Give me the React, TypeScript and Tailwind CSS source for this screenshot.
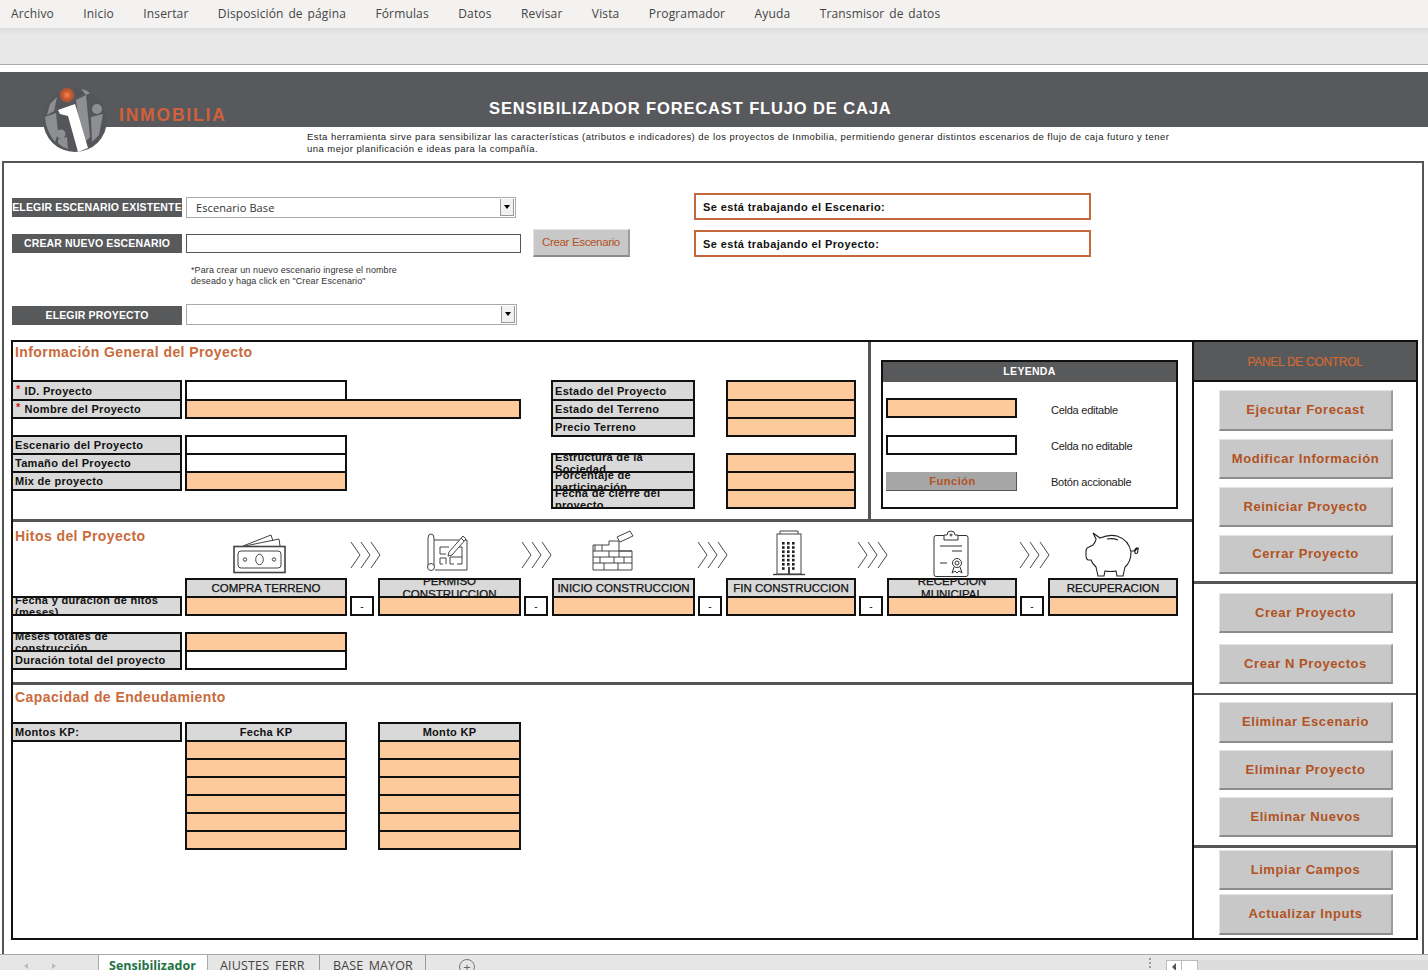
import React from "react";

const ARIAL = "font-[Liberation_Sans,Arial,sans-serif]";
const OPEN = "font-[Open_Sans,sans-serif]";

function Chevrons() {
  return (
    <svg width="32" height="28" viewBox="0 0 32 28" fill="none" stroke="#333" strokeWidth="0.9">
      <path d="M1 1 L10 14 L1 27 M11 1 L20 14 L11 27 M21 1 L30 14 L21 27" />
    </svg>
  );
}

function MoneyIcon() {
  return (
    <svg width="53" height="41" viewBox="0 0 53 41" fill="none" stroke="#444" strokeWidth="1">
      <path d="M10 13 L38 2 L40 8 M12 13 L46 6 L47 13" />
      <rect x="1" y="13.5" width="51" height="26" strokeWidth="1.6" fill="#fff" />
      <rect x="5" y="18" width="43" height="17" rx="3" />
      <ellipse cx="26.5" cy="26.5" rx="3.8" ry="5.2" />
      <circle cx="12" cy="26.5" r="1.7" />
      <circle cx="41" cy="26.5" r="1.7" />
    </svg>
  );
}

function BlueprintIcon() {
  return (
    <svg width="41" height="39" viewBox="0 0 41 39" fill="none" stroke="#444" strokeWidth="1">
      <path d="M7 7 H40 V37 H8" />
      <path d="M1 33 V5 Q1 1 4 1 Q7 1 7 5 V33" fill="#fff" />
      <circle cx="4" cy="34" r="3.5" fill="#fff" />
      <path d="M13 14 H22 M13 14 V21 H19 M13 25 H19 V31 M13 25 V31 H16 M23 24 H35 V14 H30 M23 24 V31 H27 M35 24 V31 H30" />
      <path d="M22 19 L36 3 L39 6 L25 22 L21 23 Z" fill="#fff" />
      <path d="M34 5 L37 8" />
    </svg>
  );
}

function BrickIcon() {
  return (
    <svg width="42" height="41" viewBox="0 0 42 41" fill="none" stroke="#444" strokeWidth="1">
      <path d="M1 15 H17 V11 H27 V21 H40 V40 H1 Z" />
      <path d="M1 21 H40 M1 27 H40 M1 33 H40 M10 15 V21 M17 21 V27 M27 21 V27 M8 27 V33 M22 27 V33 M32 27 V33 M12 33 V40 M26 33 V40 M3 15 V21" />
      <path d="M25 7 L38 1 L41 6 L28 12 Z" fill="#fff" />
    </svg>
  );
}

function BuildingIcon() {
  const dots: React.ReactNode[] = [];
  for (let r = 0; r < 7; r++) {
    for (let c = 0; c < 3; c++) {
      if (r === 6 && c === 1) continue;
      dots.push(<rect key={`${r}-${c}`} x={9 + c * 5} y={12 + r * 4.2} width="2.6" height="2.6" fill="#222" stroke="none" />);
    }
  }
  return (
    <svg width="32" height="46" viewBox="0 0 32 46" fill="none" stroke="#444" strokeWidth="1">
      <path d="M7 4 V1 H25 V4" />
      <rect x="4" y="4" width="24" height="40" />
      {dots}
      <path d="M0 44.5 H32" strokeWidth="1.4" />
      <path d="M16 37 V44" strokeWidth="2" />
    </svg>
  );
}

function ClipboardIcon() {
  return (
    <svg width="36" height="48" viewBox="0 0 36 48" fill="none" stroke="#333" strokeWidth="1">
      <rect x="1" y="5.5" width="34" height="41" rx="2" fill="#fff" />
      <path d="M11 10 V5 H14 Q14 1 18 1 Q22 1 22 5 H25 V10 Z" fill="#fff" />
      <circle cx="18" cy="5" r="1" />
      <path d="M7 16 H29 M19 21 H29 M7 33 H14" />
      <circle cx="24" cy="33" r="4.5" />
      <circle cx="24" cy="33" r="2" />
      <path d="M21 37 L19 43 L22 41 L24 43 L26 41 L29 43 L27 37" />
    </svg>
  );
}

function PiggyIcon() {
  return (
    <svg width="56" height="46" viewBox="0 0 56 46" fill="none" stroke="#222" strokeWidth="1.1">
      <path d="M8 1 L15 6 Q24 2 32 4 Q44 8 46 20 Q46 30 40 35 L38 44 H32 L31 39 Q26 40 20 39 L19 44 H13 L11 35 Q7 31 6 28 H3 Q1 27 1 24 V19 Q1 16 4 15 L8 13 Q11 9 11 7 Z" />
      <path d="M22 7 Q28 6 33 8" />
      <path d="M46 19 H49 Q52 14 53 17 Q53 23 50 21 Q49 18 54 16" />
    </svg>
  );
}

function Logo() {
  return (
    <svg width="64" height="66" viewBox="0 0 64 66" className="absolute left-[43px] top-[15px]">
      <defs>
        <radialGradient id="dot">
          <stop offset="0" stopColor="#f08a50" />
          <stop offset="0.6" stopColor="#c9552a" />
          <stop offset="1" stopColor="#8a5a45" />
        </radialGradient>
      </defs>
      <circle cx="32" cy="33" r="32" fill="#55565a" />
      <circle cx="24" cy="8" r="7.5" fill="url(#dot)" />
      <g fill="#8e8f92">
        <path d="M7 17 L14 10 L11 24 L4 28 Z" />
        <path d="M2 30 L13 26 L15 46 L12 55 Q3 44 2 30 Z" />
        <circle cx="18" cy="47" r="4.5" />
        <path d="M15 52 L24 50 L25 62 Q19 60 15 56 Z" />
        <path d="M38 2 Q44 3 47 6 L43 8 Z" />
        <path d="M33 13 L43 8 L47 50 L39 58 Z" />
        <circle cx="54" cy="22" r="5" />
        <path d="M48 30 L60 27 L56 48 L49 55 Z" />
      </g>
      <path d="M15 23 L32 17 L45 61 L35 65 L25 29 L17 27 Z" fill="#fff" />
    </svg>
  );
}

type RowProps = { label: React.ReactNode; value?: "w" | "o"; h?: string; valueW?: string; star?: boolean };

function Label({ children, w, h = "h-[20px]", star }: { children: React.ReactNode; w: string; h?: string; star?: boolean }) {
  return (
    <div className={`${w} ${h} shrink-0 border-2 border-[#111] bg-[#d9d9d9] flex items-center overflow-hidden pl-[2px] text-[11px] leading-[12px] font-bold tracking-[0.3px] text-[#111]`}>
      <div>
        {star && <span className="relative -top-[2px] text-[#d01818] mr-[4px] ml-[1px]">*</span>}
        {children}
      </div>
    </div>
  );
}

function Value({ kind, w, h = "h-[20px]" }: { kind: "w" | "o"; w: string; h?: string }) {
  return <div className={`${w} ${h} shrink-0 border-2 border-[#111] ${kind === "o" ? "bg-[#fdcb9b]" : "bg-white"}`} />;
}

function LeftRow({ label, value = "w", h, valueW = "w-[162px]", star }: RowProps) {
  return (
    <div className="flex -mt-[2px] first:mt-0 -ml-[2px]">
      <Label w="w-[171px]" h={h} star={star}>{label}</Label>
      <div className="ml-[3px]">
        <Value kind={value} w={valueW} h={h} />
      </div>
    </div>
  );
}

function RightRow({ label, h }: { label: React.ReactNode; h?: string }) {
  return (
    <div className="flex -mt-[2px] first:mt-0 gap-[31px]">
      <Label w="w-[144px]" h={h}>{label}</Label>
      <Value kind="o" w="w-[130px]" h={h} />
    </div>
  );
}

function SectionTitle({ children }: { children: React.ReactNode }) {
  return <div className="h-[20px] leading-[20px] pl-[2px] text-[14px] font-bold tracking-[0.42px] text-[#c96b3c]">{children}</div>;
}

function DarkLabel({ children }: { children: React.ReactNode }) {
  return (
    <div className="w-[170px] bg-[#58595b] text-white text-[10.5px] font-bold tracking-[0.15px] flex items-center justify-center whitespace-nowrap overflow-hidden">
      {children}
    </div>
  );
}

function Arrow() {
  return (
    <div className="absolute right-[1px] top-[1px] bottom-[1px] w-[14px] bg-[#f1f1f1] border-l border-r border-b border-[#999] flex items-center justify-center">
      <div className="w-0 h-0 border-l-[3px] border-r-[3px] border-t-[4px] border-l-transparent border-r-transparent border-t-black" />
    </div>
  );
}

function PanelButton({ children, cls }: { children: React.ReactNode; cls: string }) {
  return (
    <div className={`${cls} ml-[25px] w-[174px] shrink-0 bg-[#c8c8c8] border-t border-l border-t-[#e4e4e4] border-l-[#e4e4e4] border-b-2 border-r-2 border-b-[#8c8c8c] border-r-[#9c9c9c] flex items-center justify-center text-[13px] font-bold tracking-[0.55px] text-[#b2521f]`}>
      {children}
    </div>
  );
}

function PanelDivider({ cls }: { cls: string }) {
  return <div className={`${cls} shrink-0 bg-[#555]`} />;
}

function HitoHeader({ w, children }: { w: string; children: React.ReactNode }) {
  return (
    <div className={`${w} h-[20px] border-2 border-[#111] bg-[#d9d9d9] flex items-center justify-center overflow-hidden text-center text-[11.5px] leading-[13px] text-[#111] [-webkit-text-stroke:0.25px_#111]`}>
      <div>{children}</div>
    </div>
  );
}

const MENU = ["Archivo", "Inicio", "Insertar", "Disposición de página", "Fórmulas", "Datos", "Revisar", "Vista", "Programador", "Ayuda", "Transmisor de datos"];

export default function App() {
  return (
    <div className={`w-[1428px] h-[970px] overflow-hidden bg-white flex flex-col ${ARIAL}`}>
      {/* Excel menu */}
      <div className={`h-[28px] shrink-0 bg-[#f3f2f1] flex items-center pl-[11px] gap-[29.4px] ${OPEN} text-[12px] text-[#444] tracking-[0.15px] [word-spacing:1.5px]`}>
        {MENU.map((m) => (
          <span key={m}>{m}</span>
        ))}
      </div>
      <div className="h-[37px] shrink-0 border-b border-[#aaa] bg-gradient-to-b from-[#dcdcdc] to-[#e8e8e8] to-[20%]" />
      <div className="h-[7px] shrink-0 bg-white" />

      {/* Banner */}
      <div className="relative h-[89px] shrink-0">
        <div className="h-[55px] bg-[#58595d] pl-[489px] pt-[26px]">
          <div className="text-white text-[16.5px] leading-[20px] font-bold tracking-[0.87px]">SENSIBILIZADOR FORECAST FLUJO DE CAJA</div>
        </div>
        <Logo />
        <div className="absolute left-[119px] top-[33px] text-[17.5px] leading-[20px] font-bold tracking-[1.8px] text-[#d2603a]">INMOBILIA</div>
        <div className="pl-[307px] pt-[4px] text-[9.5px] leading-[12px] tracking-[0.45px] text-[#222]">
          Esta herramienta sirve para sensibilizar las características (atributos e indicadores) de los proyectos de Inmobilia, permitiendo generar distintos escenarios de flujo de caja futuro y tener
          <br />
          una mejor planificación e ideas para la compañía.
        </div>
      </div>

      {/* Main sheet frame */}
      <div className="flex-1 min-h-0 ml-[2px] w-[1422px] border-t-2 border-x-2 border-[#555] overflow-hidden">
        {/* Scenario selectors */}
        <div className="h-[177px] flex">
          <div className="w-[690px] pl-[8px] pt-[34px] shrink-0">
            <div className="flex h-[21px]">
              <div className="flex my-[1px]"><DarkLabel>ELEGIR ESCENARIO EXISTENTE</DarkLabel></div>
              <div className={`relative ml-[4px] w-[330px] border border-[#aaa] bg-white flex items-center pl-[9px] pt-[1px] text-[11px] text-[#333] tracking-[0.1px] ${OPEN}`}>
                Escenario Base
                <Arrow />
              </div>
            </div>
            <div className="flex h-[28px] mt-[11px] items-center">
              <div className="flex h-[19px] mt-[1px]"><DarkLabel>CREAR NUEVO ESCENARIO</DarkLabel></div>
              <div className="ml-[4px] w-[335px] h-[19px] mt-[1px] border border-[#555] bg-white" />
              <div className="ml-[12px] w-[97px] h-[28px] bg-[#c8c8c8] border-t border-l border-[#e4e4e4] border-b-2 border-r-2 border-b-[#8c8c8c] border-r-[#9c9c9c] flex items-center justify-center pt-[1px] text-[11.5px] tracking-[-0.35px] text-[#b2521f]">
                Crear Escenario
              </div>
            </div>
            <div className="ml-[179px] mt-[8px] text-[9px] leading-[11px] tracking-[0.1px] text-[#333]">
              *Para crear un nuevo escenario ingrese el nombre
              <br />
              deseado y haga click en "Crear Escenario"
            </div>
            <div className="flex h-[21px] mt-[17px]">
              <div className="flex mt-[2px]"><DarkLabel>ELEGIR PROYECTO</DarkLabel></div>
              <div className="relative ml-[4px] w-[331px] border border-[#aaa] bg-white">
                <Arrow />
              </div>
            </div>
          </div>
          <div className="pt-[30px]">
            <div className="w-[397px] h-[27px] border-[2.5px] border-[#c4693c] flex items-center pl-[7px] pt-[2px] text-[11px] font-bold tracking-[0.4px] text-[#111]">
              Se está trabajando el Escenario:
            </div>
            <div className="mt-[10px] w-[397px] h-[27px] border-[2.5px] border-[#c4693c] flex items-center pl-[7px] pt-[2px] text-[11px] font-bold tracking-[0.4px] text-[#111]">
              Se está trabajando el Proyecto:
            </div>
          </div>
        </div>

        {/* Project frame */}
        <div className="ml-[7px] w-[1407px] h-[600px] border-2 border-[#111] flex">
          <div className="w-[1179px] shrink-0 flex flex-col">
            {/* General info + legend */}
            <div className="h-[180px] shrink-0 border-b-[3px] border-[#555] flex">
              <div className="w-[855px] shrink-0">
                <div className="h-[38px]">
                  <SectionTitle>Información General del Proyecto</SectionTitle>
                </div>
                <div className="flex">
                  <div className="w-[538px] shrink-0">
                    <LeftRow star label="ID. Proyecto" h="h-[21px]" />
                    <LeftRow star label="Nombre del Proyecto" value="o" valueW="w-[336px]" />
                    <div className="h-[16px]" />
                    <div className="flex -ml-[2px]">
                      <Label w="w-[171px]">Escenario del Proyecto</Label>
                      <div className="ml-[3px]"><Value kind="w" w="w-[162px]" /></div>
                    </div>
                    <LeftRow label="Tamaño del Proyecto" />
                    <LeftRow label="Mix de proyecto" value="o" />
                  </div>
                  <div>
                    <RightRow label="Estado del Proyecto" h="h-[21px]" />
                    <RightRow label="Estado del Terreno" />
                    <RightRow label="Precio Terreno" />
                    <div className="h-[16px]" />
                    <div className="flex gap-[31px]">
                      <Label w="w-[144px]">Estructura de la<br />Sociedad</Label>
                      <Value kind="o" w="w-[130px]" />
                    </div>
                    <RightRow label={<>Porcentaje de<br />participación</>} />
                    <RightRow label={<>Fecha de cierre del<br />proyecto</>} />
                  </div>
                </div>
              </div>
              <div className="w-[3px] shrink-0 bg-[#555]" />
              <div className="flex-1 pl-[10px] pt-[18px]">
                <div className="w-[297px] h-[149px] border-2 border-[#111]">
                  <div className="h-[20px] bg-[#58595b] pb-[1px] text-white text-[10.5px] font-bold tracking-[0.3px] flex items-center justify-center">LEYENDA</div>
                  <div className="flex items-center mt-[16px] ml-[3px] h-[20px]">
                    <Value kind="o" w="w-[131px]" />
                    <span className="ml-[34px] mt-[4px] text-[11px] tracking-[-0.25px] text-[#222]">Celda editable</span>
                  </div>
                  <div className="flex items-center mt-[17px] ml-[3px] h-[20px]">
                    <Value kind="w" w="w-[131px]" />
                    <span className="ml-[34px] mt-[2px] text-[11px] tracking-[-0.25px] text-[#222]">Celda no editable</span>
                  </div>
                  <div className="flex items-center mt-[17px] ml-[3px] h-[19px]">
                    <div className="w-[131px] h-[19px] bg-[#a6a6a6] border-b border-r border-[#555] flex items-center justify-center pt-[1px] pl-[3px] text-[11px] font-bold tracking-[0.5px] text-[#b2521f]">Función</div>
                    <span className="ml-[34px] mt-[2px] text-[11px] tracking-[-0.25px] text-[#222]">Botón accionable</span>
                  </div>
                </div>
              </div>
            </div>

            {/* Milestones */}
            <div className="h-[163px] shrink-0 border-b-[3px] border-[#555]">
              <div className="grid grid-cols-[172px_162px_31px_143px_31px_143px_31px_130px_31px_130px_31px_130px] grid-rows-[56px_20px_20px]">
                <div className="pt-[4px]"><SectionTitle>Hitos del Proyecto</SectionTitle></div>
                <div className="pt-[11px] pl-[48px]"><MoneyIcon /></div>
                <div className="pt-[19px] pl-[3px]"><Chevrons /></div>
                <div className="pt-[11px] pl-[49px]"><BlueprintIcon /></div>
                <div className="pt-[19px]"><Chevrons /></div>
                <div className="pt-[8px] pl-[40px]"><BrickIcon /></div>
                <div className="pt-[19px] pl-[2px]"><Chevrons /></div>
                <div className="pt-[8px] pl-[47px]"><BuildingIcon /></div>
                <div className="pt-[19px] pl-[1px]"><Chevrons /></div>
                <div className="pt-[8px] pl-[46px]"><ClipboardIcon /></div>
                <div className="pt-[19px] pl-[2px]"><Chevrons /></div>
                <div className="pt-[10px] pl-[37px]"><PiggyIcon /></div>

                <div />
                <HitoHeader w="w-[162px]">COMPRA TERRENO</HitoHeader>
                <div />
                <HitoHeader w="w-[143px]">PERMISO<br />CONSTRUCCION</HitoHeader>
                <div />
                <HitoHeader w="w-[143px]">INICIO CONSTRUCCION</HitoHeader>
                <div />
                <HitoHeader w="w-[130px]">FIN CONSTRUCCION</HitoHeader>
                <div />
                <HitoHeader w="w-[130px]">RECEPCION<br />MUNICIPAL</HitoHeader>
                <div />
                <HitoHeader w="w-[130px]">RECUPERACION</HitoHeader>

                <div className="-mt-[2px] -ml-[2px]"><Label w="w-[171px]">Fecha y duracion de hitos<br />(meses)</Label></div>
                <div className="-mt-[2px]"><Value kind="o" w="w-[162px]" /></div>
                <DashBox />
                <div className="-mt-[2px]"><Value kind="o" w="w-[143px]" /></div>
                <DashBox />
                <div className="-mt-[2px]"><Value kind="o" w="w-[143px]" /></div>
                <DashBox />
                <div className="-mt-[2px]"><Value kind="o" w="w-[130px]" /></div>
                <DashBox />
                <div className="-mt-[2px]"><Value kind="o" w="w-[130px]" /></div>
                <DashBox />
                <div className="-mt-[2px]"><Value kind="o" w="w-[130px]" /></div>
              </div>
              <div className="mt-[14px]">
                <div className="flex -ml-[2px]">
                  <Label w="w-[171px]">Meses totales de<br />construcción</Label>
                  <div className="ml-[3px]"><Value kind="o" w="w-[162px]" /></div>
                </div>
                <LeftRow label="Duración total del proyecto" />
              </div>
            </div>

            {/* Debt capacity */}
            <div className="flex-1 pt-[2px]">
              <div className="h-[35px]">
                <SectionTitle>Capacidad de Endeudamiento</SectionTitle>
              </div>
              <div className="flex -ml-[2px]">
                <Label w="w-[171px]">Montos KP:</Label>
                <div className="ml-[3px]">
                  <HitoHeader w="w-[162px]"><span className="font-bold [-webkit-text-stroke:0px] text-[11px] tracking-[0.3px]">Fecha KP</span></HitoHeader>
                  {[0, 1, 2, 3, 4, 5].map((i) => (
                    <div key={i} className="-mt-[2px]"><Value kind="o" w="w-[162px]" /></div>
                  ))}
                </div>
                <div className="ml-[31px]">
                  <HitoHeader w="w-[143px]"><span className="font-bold [-webkit-text-stroke:0px] text-[11px] tracking-[0.3px]">Monto KP</span></HitoHeader>
                  {[0, 1, 2, 3, 4, 5].map((i) => (
                    <div key={i} className="-mt-[2px]"><Value kind="o" w="w-[143px]" /></div>
                  ))}
                </div>
              </div>
            </div>
          </div>

          {/* Control panel */}
          <div className="flex-1 border-l-2 border-[#111] flex flex-col">
            <div className="h-[40px] shrink-0 bg-[#58595b] border-b-2 border-[#111] flex items-center justify-center pt-[2px] text-[12px] tracking-[-0.3px] text-[#cf6a33] [-webkit-text-stroke:0.2px_#cf6a33]">PANEL DE CONTROL</div>
            <PanelButton cls="mt-[8px] h-[41px]">Ejecutar Forecast</PanelButton>
            <PanelButton cls="mt-[8px] h-[40px]">Modificar Información</PanelButton>
            <PanelButton cls="mt-[8px] h-[40px]">Reiniciar Proyecto</PanelButton>
            <PanelButton cls="mt-[8px] h-[39px]">Cerrar Proyecto</PanelButton>
            <PanelDivider cls="mt-[7px] h-[3px]" />
            <PanelButton cls="mt-[9px] h-[40px]">Crear Proyecto</PanelButton>
            <PanelButton cls="mt-[11px] h-[40px]">Crear N Proyectos</PanelButton>
            <PanelDivider cls="mt-[9px] h-[2px]" />
            <PanelButton cls="mt-[7px] h-[41px]">Eliminar Escenario</PanelButton>
            <PanelButton cls="mt-[7px] h-[40px]">Eliminar Proyecto</PanelButton>
            <PanelButton cls="mt-[7px] h-[40px]">Eliminar Nuevos</PanelButton>
            <PanelDivider cls="mt-[8px] h-[3px]" />
            <PanelButton cls="mt-[2px] h-[40px]">Limpiar Campos</PanelButton>
            <PanelButton cls="mt-[4px] h-[41px]">Actualizar Inputs</PanelButton>
          </div>
        </div>
      </div>

      {/* Sheet tabs */}
      <div className={`h-[16px] shrink-0 bg-[#e6e6e6] border-t border-[#aaa] flex ${OPEN} overflow-hidden`}>
        <div className="w-[98px] shrink-0 flex items-start pt-[8px] pl-[24px] gap-[24px] text-[#bbb]">
          <div className="w-0 h-0 border-y-[3px] border-r-[4px] border-y-transparent border-r-[#bbb]" />
          <div className="w-0 h-0 border-y-[3px] border-l-[4px] border-y-transparent border-l-[#bbb]" />
        </div>
        <div className="w-[110px] shrink-0 bg-white border-x border-[#aaa] pl-[10px] pt-[2px] text-[12.5px] leading-[18px] font-bold text-[#217346] whitespace-nowrap">Sensibilizador</div>
        <div className="w-[112px] shrink-0 border-r border-[#999] pl-[12px] pt-[2px] text-[12.5px] tracking-[0.2px] leading-[18px] text-[#444] whitespace-nowrap">AJUSTES_FERR</div>
        <div className="w-[106px] shrink-0 border-r border-[#999] pl-[13px] pt-[2px] text-[12.5px] tracking-[0.1px] leading-[18px] text-[#444] whitespace-nowrap">BASE_MAYOR</div>
        <div className="ml-[33px] mt-[4px] w-[16px] h-[16px] rounded-full border border-[#777] shrink-0 flex items-center justify-center text-[13px] leading-[13px] text-[#666]">+</div>
        <div className="ml-[674px] pt-[3px] flex flex-col gap-[2px] shrink-0">
          <div className="w-[2px] h-[2px] bg-[#999]" />
          <div className="w-[2px] h-[2px] bg-[#999]" />
          <div className="w-[2px] h-[2px] bg-[#999]" />
        </div>
        <div className="ml-[15px] mt-[5px] w-[16px] h-[12px] bg-white border border-[#bbb] flex items-start justify-center pt-[2px] shrink-0">
          <div className="w-0 h-0 border-y-[4px] border-r-[4px] border-y-transparent border-r-[#555]" />
        </div>
        <div className="mt-[5px] w-[16px] h-[12px] bg-white border-t border-r border-[#bbb] shrink-0" />
        <div className="mt-[5px] flex-1 bg-[#dcdcdc]" />
      </div>
    </div>
  );
}

function DashBox() {
  return (
    <div className="-mt-[2px] pl-[3px]">
      <div className="w-[24px] h-[20px] border-2 border-[#111] bg-white flex items-center justify-center text-[10px] text-[#111]">-</div>
    </div>
  );
}
